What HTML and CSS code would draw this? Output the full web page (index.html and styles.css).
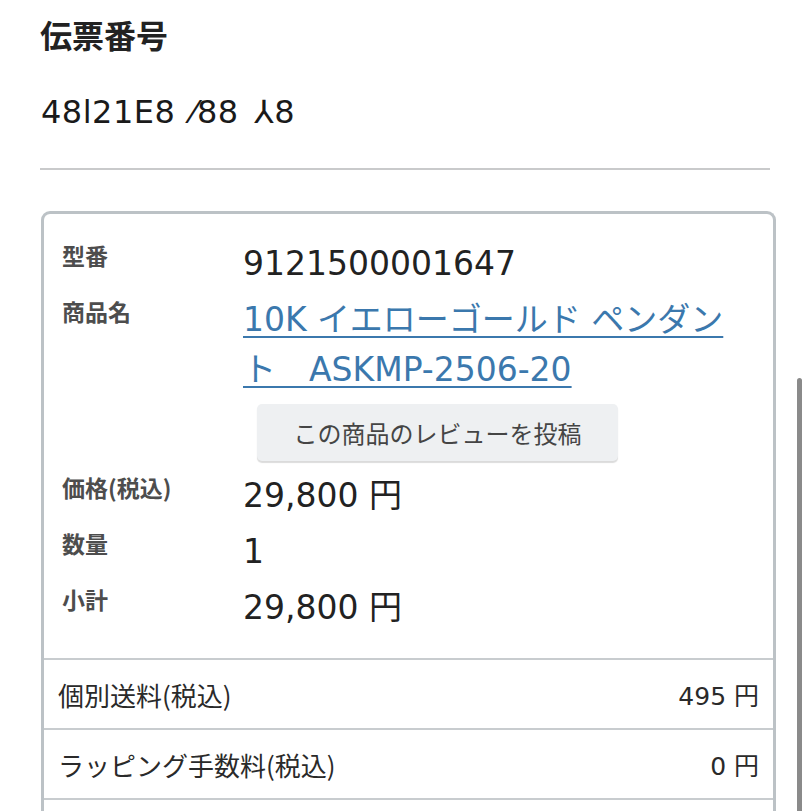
FILE: index.html
```html
<!DOCTYPE html>
<html lang="ja">
<head>
<meta charset="utf-8">
<title>注文詳細</title>
<link rel="stylesheet" href="styles.css">
</head>
<body>
<main class="page">
  <section class="slip">
    <h2 class="slip-title">伝票番号</h2>
    <p class="slip-number">48l21E8 ⁄88 ⅄8</p>
  </section>
  <hr class="divider">
  <section class="item-card">
    <dl class="item-specs">
      <div class="spec-row">
        <dt>型番</dt>
        <dd>9121500001647</dd>
      </div>
      <div class="spec-row">
        <dt>商品名</dt>
        <dd>
          <a class="item-link" href="#">10K イエローゴールド ペンダント　ASKMP-2506-20</a>
          <button class="review-btn" type="button">この商品のレビューを投稿</button>
        </dd>
      </div>
      <div class="spec-row">
        <dt>価格(税込)</dt>
        <dd>29,800 円</dd>
      </div>
      <div class="spec-row">
        <dt>数量</dt>
        <dd>1</dd>
      </div>
      <div class="spec-row">
        <dt>小計</dt>
        <dd>29,800 円</dd>
      </div>
    </dl>
    <div class="fee-row">
      <span class="fee-label">個別送料(税込)</span>
      <span class="fee-value">495 円</span>
    </div>
    <div class="fee-row">
      <span class="fee-label">ラッピング手数料(税込)</span>
      <span class="fee-value">0 円</span>
    </div>
    <div class="fee-row">
      <span class="fee-label">&nbsp;</span>
    </div>
  </section>
  <div class="scroll-thumb"></div>
</main>
</body>
</html>
```

FILE: styles.css
```css
html, body {
  margin: 0;
  padding: 0;
  overflow: hidden;
  background: #ffffff;
}

body {
  font-family: "DejaVu Sans", "Noto Sans CJK JP", sans-serif;
  color: #222222;
}

.page {
  padding: 14px 41px 0 40px;
}

/* tracking number block */
.slip-title {
  margin: 0;
  font-family: "Noto Sans CJK JP", sans-serif;
  font-size: 32px;
  font-weight: 700;
  line-height: 40px;
  color: #222222;
}

.slip-number {
  margin: 38px 0 0 1px;
  font-size: 32px;
  line-height: 40px;
  color: #1a1a1a;
  letter-spacing: 0.5px;
  word-spacing: 5px;
}

.divider {
  margin: 36px 0 0 0;
  border: 0;
  border-top: 2px solid #c9cacb;
  width: 730px;
}

/* product card */
.item-card {
  margin-top: 41px;
  margin-left: 1px;
  width: 729px;
  border: 3px solid #bcc2c6;
  border-bottom: 0;
  border-radius: 9px 9px 0 0;
}

.item-specs {
  margin: 0;
  padding: 25px 0 25px 18px;
  display: flex;
  flex-direction: column;
  gap: 6px;
}

.spec-row {
  display: grid;
  grid-template-columns: 181px 495px;
  align-items: start;
}

.spec-row dt {
  font-family: "Noto Sans CJK JP", sans-serif;
  font-size: 23px;
  font-weight: 700;
  line-height: 32px;
  color: #4d4d4d;
}

.spec-row dd {
  margin: 0;
  font-size: 33px;
  line-height: 50px;
  color: #222222;
}

.item-link {
  color: #3b78ad;
  text-decoration: underline;
  text-decoration-thickness: 2px;
  text-underline-offset: 5px;
}

.review-btn {
  display: block;
  margin: 9px 0 4px 14px;
  width: 361px;
  height: 57px;
  border: 0;
  border-radius: 5px;
  background: #eef0f2;
  box-shadow: 0 2px 1px rgba(0, 0, 0, 0.14);
  font-family: "Noto Sans CJK JP", sans-serif;
  font-size: 24px;
  color: #454545;
}

/* shipping / wrapping fees */
.fee-row {
  display: flex;
  justify-content: space-between;
  align-items: center;
  height: 68px;
  padding: 0 14px;
  border-top: 2px solid #c8cccf;
  font-size: 25px;
  color: #2a2a2a;
}

.fee-label {
  font-family: "Noto Sans CJK JP", sans-serif;
  font-size: 26px;
}

/* overlay scrollbar thumb */
.scroll-thumb {
  position: fixed;
  left: 797px;
  top: 378px;
  width: 5px;
  height: 460px;
  border-radius: 3px;
  background: #8a8a8a;
}
```
